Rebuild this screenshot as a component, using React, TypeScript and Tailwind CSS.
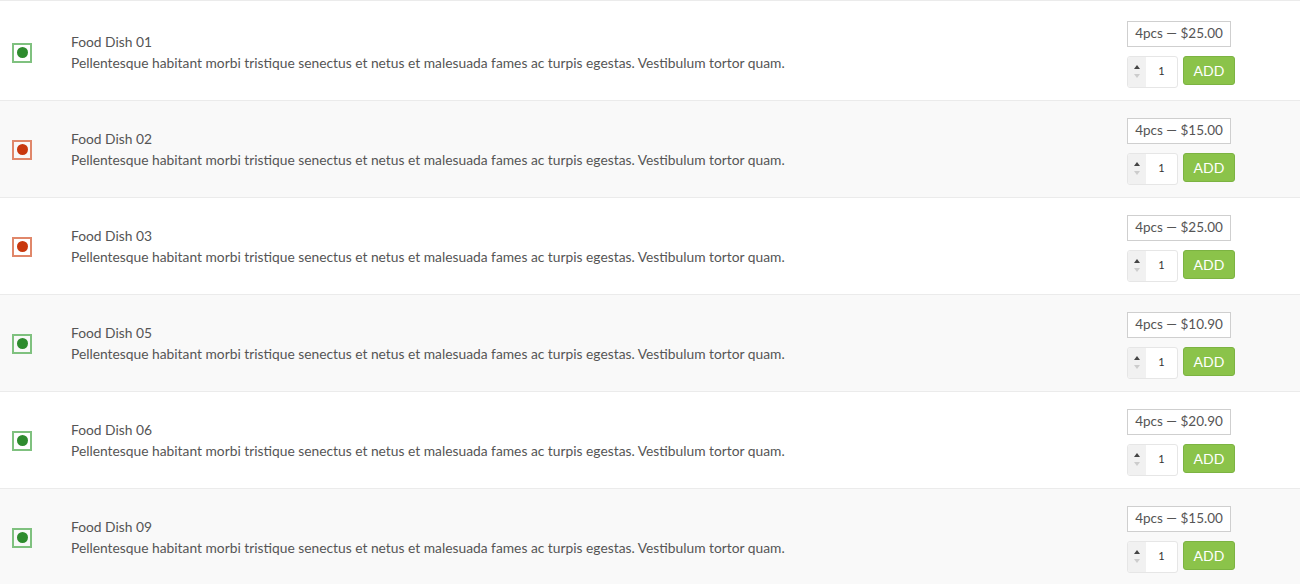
const dishes = [
  { name: "Food Dish 01", veg: true, price: "$25.00" },
  { name: "Food Dish 02", veg: false, price: "$15.00" },
  { name: "Food Dish 03", veg: false, price: "$25.00" },
  { name: "Food Dish 05", veg: true, price: "$10.90" },
  { name: "Food Dish 06", veg: true, price: "$20.90" },
  { name: "Food Dish 09", veg: true, price: "$15.00" },
];

const desc =
  "Pellentesque habitant morbi tristique senectus et netus et malesuada fames ac turpis egestas. Vestibulum tortor quam.";

const VegMark = ({ veg }: { veg: boolean }) => (
  <div
    className={`w-[20px] h-[20px] flex items-center justify-center border-2 ${
      veg ? "border-[#7fc17f]" : "border-[#e0876a]"
    }`}
  >
    <span
      className={`w-[11px] h-[11px] rounded-full ${veg ? "bg-[#2e8b2e]" : "bg-[#c8380e]"}`}
    />
  </div>
);

const Row = ({ d, i }: { d: (typeof dishes)[number]; i: number }) => (
  <div
    className={`flex items-center border-b border-[#ebebeb] ${
      i % 2 === 1 ? "bg-[#f9f9f9]" : "bg-white"
    } ${i === 0 ? "h-[100px] pt-[3px]" : "h-[97px]"}`}
  >
    <div className="pl-[12px] w-[71px] shrink-0 pt-[1px]">
      <VegMark veg={d.veg} />
    </div>
    <div className="flex flex-col text-[13.8px] leading-[21px] text-[#555]">
      <span>{d.name}</span>
      <span>{desc}</span>
    </div>
    <div className="ml-auto mr-[65px] w-[108px] flex flex-col gap-[9px] pt-[4px]">
      <div className="w-[104px] h-[26px] border border-[#cfcfcf] bg-white flex items-center justify-center text-[13.5px] text-[#555]">
        4pcs — {d.price}
      </div>
      <div className="flex items-start gap-[5px]">
        <div className="w-[51px] h-[32px] border border-[#e6e6e6] rounded-[3px] flex overflow-hidden bg-white">
          <div className="w-[18px] bg-[#f1f1f1] flex flex-col items-center justify-center gap-[5px]">
            <span className="w-0 h-0 border-l-[3.5px] border-r-[3.5px] border-b-[4px] border-l-transparent border-r-transparent border-b-[#444]" />
            <span className="w-0 h-0 border-l-[3.5px] border-r-[3.5px] border-t-[4px] border-l-transparent border-r-transparent border-t-[#ccc]" />
          </div>
          <div className="flex-1 flex items-center justify-center text-[11px] text-[#333]">1</div>
        </div>
        <button className="w-[52px] h-[29px] rounded-[3px] bg-[#8bc34a] border border-[#7cb342] text-white text-[14px] flex items-center justify-center">
          ADD
        </button>
      </div>
    </div>
  </div>
);

export default function App() {
  return (
    <div className="w-[1300px] h-[584px] overflow-hidden bg-white border-t border-[#ebebeb] font-['Lato',sans-serif]">
      {dishes.map((d, i) => (
        <Row key={d.name} d={d} i={i} />
      ))}
    </div>
  );
}
